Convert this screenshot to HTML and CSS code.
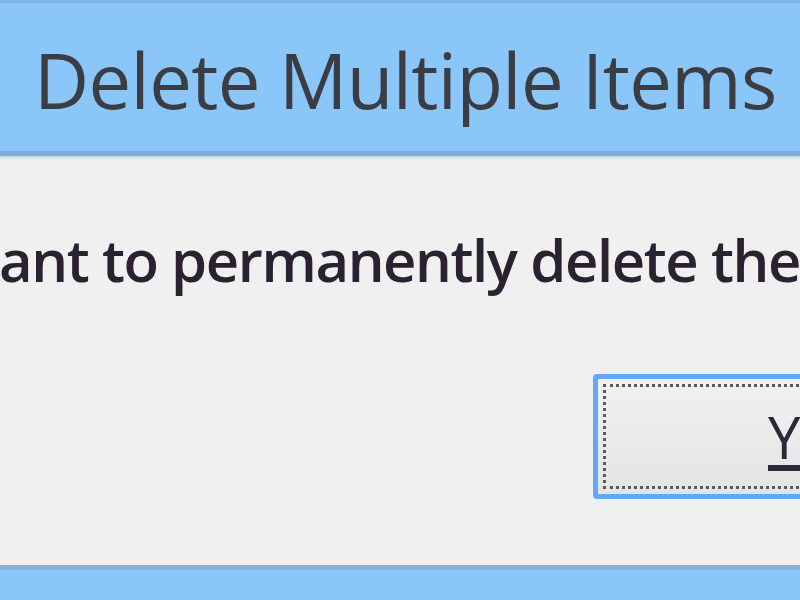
FILE: index.html
```html
<!DOCTYPE html>
<html lang="en">
  <head>
    <meta charset="UTF-8" />
    <title>Delete Multiple Items</title>
    <link rel="stylesheet" href="styles.css">
  </head>
  <body>
    <div class="dialog">
      <div class="titlebar">
        <h1>Delete Multiple Items</h1>
      </div>
      <div class="content">
        <p class="question">ant to permanently delete the</p>
        <div class="buttons">
          <button class="btn btn-default"><span class="focus"><u>Y</u></span></button>
        </div>
      </div>
      <div class="frame-bottom"></div>
    </div>
  </body>
</html>
```

FILE: styles.css
```css
:root {
  --frame-color: #8bc6f8; /* cornice finestra */
  --frame-edge: #7eb2e2;
  --panel-color: #f0f0f0;
  --title-color: #3b3d44;
  --text-color: #2a2230;
  --focus-blue: #62a8f6;
}

html, body {
  margin: 0;
  padding: 0;
  height: 100%;
  overflow: hidden;
}

body {
  background-color: var(--panel-color);
  font-family: "Open Sans", "Noto Sans", sans-serif;
}

.dialog {
  display: flex;
  flex-direction: column;
  height: 600px;
}

.titlebar {
  height: 148px;
  background-color: var(--frame-color);
  border-top: 3px solid var(--frame-edge);
  border-bottom: 5px solid #7cadd9;
  box-shadow: 0 2px 2px rgba(120, 160, 200, 0.35);
  display: flex;
  align-items: center;
  padding-left: 34px;
}

.titlebar h1 {
  margin: 0 0 -4px;
  font-size: 76px;
  font-weight: 400;
  color: var(--title-color);
  white-space: nowrap;
  letter-spacing: -0.6px;
}

.content {
  flex: 1;
  display: flex;
  flex-direction: column;
  overflow: hidden;
}

.question {
  margin: 64px 0 0 -1px;
  font-size: 58px;
  font-weight: 600;
  line-height: 80px;
  color: var(--text-color);
  white-space: nowrap;
  letter-spacing: -1.4px;
}

.buttons {
  display: flex;
  margin-top: 74px;
  padding-left: 593px;
}

.btn {
  flex-shrink: 0;
  width: 360px;
  height: 125px;
  padding: 5px;
  border: 5px solid var(--focus-blue);
  border-radius: 4px;
  background: linear-gradient(#f1f1f1, #e4e4e4);
  font-family: inherit;
  color: #2a2a36;
  cursor: pointer;
}

.btn .focus {
  display: flex;
  align-items: center;
  height: 100%;
  box-sizing: border-box;
  border: 3px dotted #5a5a5a;
  padding-left: 162px;
  font-size: 58px;
  line-height: 1;
}

.btn u {
  text-decoration-thickness: 6px;
  text-underline-offset: 6px;
}

.frame-bottom {
  height: 30px;
  background-color: var(--frame-color);
  border-top: 5px solid #84b3dc;
}
```
